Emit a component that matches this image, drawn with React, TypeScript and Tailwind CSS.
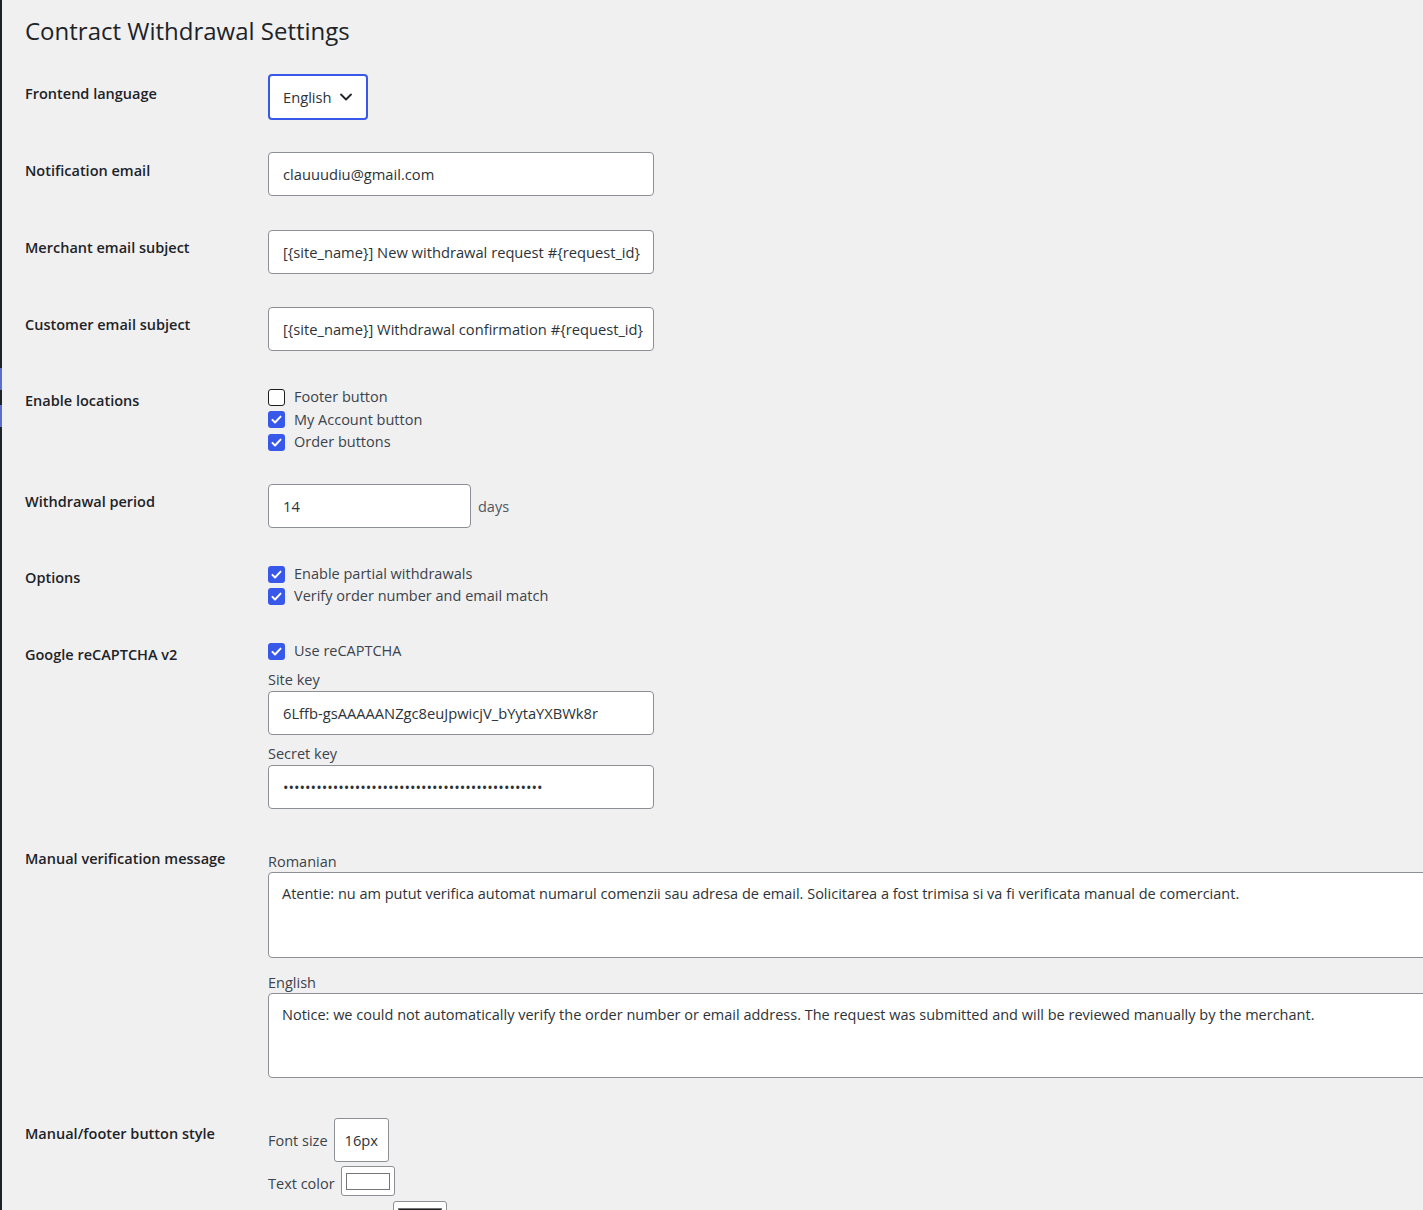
import type { ReactNode } from 'react';

interface RowProps {
  label: string;
  rowClass: string;
  labelClass: string;
  children: ReactNode;
}

function Row({ label, rowClass, labelClass, children }: RowProps) {
  return (
    <div className={`flex items-start ${rowClass}`}>
      <div
        className={`w-[243px] shrink-0 text-[14.5px] font-semibold leading-[20px] text-[#1d2327] ${labelClass}`}
      >
        {label}
      </div>
      <div className="min-w-0 flex-1">{children}</div>
    </div>
  );
}

function TextInput({ value, width = 'w-[386px]', type = 'text' }: { value: string; width?: string; type?: string }) {
  return (
    <input
      type={type}
      readOnly
      defaultValue={value}
      className={`block h-[44px] ${width} rounded-[4px] border border-[#8c8f94] bg-white pl-[14px] pr-[10px] text-[14.7px] text-[#2c3338] outline-none`}
    />
  );
}

function Checkbox({ checked, label }: { checked: boolean; label: string }) {
  return (
    <label className="flex h-[22px] items-center gap-[9px] text-[14.5px] text-[#3c434a]">
      {checked ? (
        <span className="flex h-[17px] w-[17px] shrink-0 items-center justify-center rounded-[3px] bg-[#3858e9]">
          <svg viewBox="0 0 16 16" className="h-[13px] w-[13px]" fill="none">
            <path d="M3 8.5l3.2 3.2L13 4.5" stroke="white" strokeWidth="2.4" strokeLinecap="round" strokeLinejoin="round" />
          </svg>
        </span>
      ) : (
        <span className="h-[17px] w-[17px] shrink-0 rounded-[3px] border border-[#1e1e1e] bg-white" />
      )}
      {label}
    </label>
  );
}

function ColorSwatch({ fill }: { fill: string }) {
  return (
    <span className="flex h-[30px] w-[54px] shrink-0 items-center justify-center rounded-[3px] border border-[#8c8f94] bg-white">
      <span className={`h-[17px] w-[44px] border border-[#767676] ${fill}`} />
    </span>
  );
}

export default function App() {
  return (
    <div className="flex min-h-[1210px] w-full overflow-hidden bg-[#f0f0f1] font-['Open_Sans','Noto_Sans',sans-serif]">
      {/* edge of the admin menu */}
      <div className="flex w-[2px] shrink-0 flex-col bg-[#1d2327]">
        <div className="h-[368px]" />
        <div className="h-[22px] bg-[#5b6ed0]" />
        <div className="h-[15px]" />
        <div className="h-[22px] bg-[#5b6ed0]" />
      </div>

      <div className="min-w-0 flex-1 pl-[23px]">
        <h1 className="h-[74px] pt-[16px] text-[24px] font-normal leading-[30px] text-[#1d2327]">
          Contract Withdrawal Settings
        </h1>

        <Row label="Frontend language" rowClass="h-[78px]" labelClass="pt-[10px]">
          <div className="flex h-[46px] w-[100px] items-center justify-between rounded-[4px] border-2 border-[#3858e9] bg-white pl-[13px] pr-[12px] text-[14.7px] text-[#2c3338]">
            <span>English</span>
            <svg viewBox="0 0 16 16" className="h-[16px] w-[16px]" fill="none">
              <path d="M3 5.5l5 5 5-5" stroke="#1d2327" strokeWidth="1.8" strokeLinecap="round" strokeLinejoin="round" />
            </svg>
          </div>
        </Row>

        <Row label="Notification email" rowClass="h-[78px]" labelClass="pt-[9px]">
          <TextInput value="clauuudiu@gmail.com" />
        </Row>

        <Row label="Merchant email subject" rowClass="h-[77px]" labelClass="pt-[8px]">
          <TextInput value="[{site_name}] New withdrawal request #{request_id}" />
        </Row>

        <Row label="Customer email subject" rowClass="h-[79px]" labelClass="pt-[8px]">
          <TextInput value="[{site_name}] Withdrawal confirmation #{request_id}" />
        </Row>

        <Row label="Enable locations" rowClass="h-[98px]" labelClass="pt-[5px]">
          <div className="flex flex-col gap-[0.5px]">
            <Checkbox checked={false} label="Footer button" />
            <Checkbox checked label="My Account button" />
            <Checkbox checked label="Order buttons" />
          </div>
        </Row>

        <Row label="Withdrawal period" rowClass="h-[78px]" labelClass="pt-[8px]">
          <div className="flex items-center gap-[7px]">
            <TextInput value="14" width="w-[203px]" />
            <span className="pt-[2px] text-[14.5px] text-[#50575e]">days</span>
          </div>
        </Row>

        <Row label="Options" rowClass="h-[78px]" labelClass="pt-[6px]">
          <div className="pt-[1px]">
            <Checkbox checked label="Enable partial withdrawals" />
            <Checkbox checked label="Verify order number and email match" />
          </div>
        </Row>

        <Row label="Google reCAPTCHA v2" rowClass="h-[208px]" labelClass="pt-[5px]">
          <Checkbox checked label="Use reCAPTCHA" />
          <div className="mt-[7px] text-[14.5px] leading-[22px] text-[#3c434a]">Site key</div>
          <TextInput value="6Lffb-gsAAAAANZgc8euJpwicjV_bYytaYXBWk8r" />
          <div className="mt-[8px] text-[14.5px] leading-[22px] text-[#3c434a]">Secret key</div>
          <TextInput type="password" value="qwertyuiopasdfghjklzxcvbnm12345678901234567890x" />
        </Row>

        <Row label="Manual verification message" rowClass="h-[270px]" labelClass="pt-[1px]">
          <div className="pt-[3px]">
            <div className="text-[14.5px] leading-[21px] text-[#3c434a]">Romanian</div>
            <textarea
              readOnly
              defaultValue="Atentie: nu am putut verifica automat numarul comenzii sau adresa de email. Solicitarea a fost trimisa si va fi verificata manual de comerciant."
              className="block h-[86px] w-[1220px] resize-none rounded-[4px] border border-[#8c8f94] bg-white px-[13px] py-[10px] text-[14.5px] leading-[21px] text-[#2c3338] outline-none"
            />
            <div className="mt-[14px] text-[14.5px] leading-[21px] text-[#3c434a]">English</div>
            <textarea
              readOnly
              defaultValue="Notice: we could not automatically verify the order number or email address. The request was submitted and will be reviewed manually by the merchant."
              className="block h-[85px] w-[1220px] resize-none rounded-[4px] border border-[#8c8f94] bg-white px-[13px] py-[10px] text-[14.5px] leading-[21px] text-[#2c3338] outline-none"
            />
          </div>
        </Row>

        <Row label="Manual/footer button style" rowClass="h-[160px]" labelClass="pt-[6px]">
          <div className="flex items-center gap-[6px] text-[14.5px] text-[#3c434a]">
            <span className="pt-[2px]">Font size</span>
            <input
              readOnly
              defaultValue="16px"
              className="h-[44px] w-[55px] rounded-[3px] border border-[#8c8f94] bg-white px-[10px] text-[14.7px] text-[#2c3338] outline-none"
            />
          </div>
          <div className="mt-[4px] flex items-center gap-[6px] text-[14.5px] text-[#3c434a]">
            <span className="pt-[5px]">Text color</span>
            <ColorSwatch fill="bg-white" />
          </div>
          <div className="mt-[5px] flex items-start gap-[6px] text-[14.5px] text-[#3c434a]">
            <span className="pt-[18px]">Background color</span>
            <ColorSwatch fill="bg-[#1d2327]" />
          </div>
        </Row>
      </div>
    </div>
  );
}
